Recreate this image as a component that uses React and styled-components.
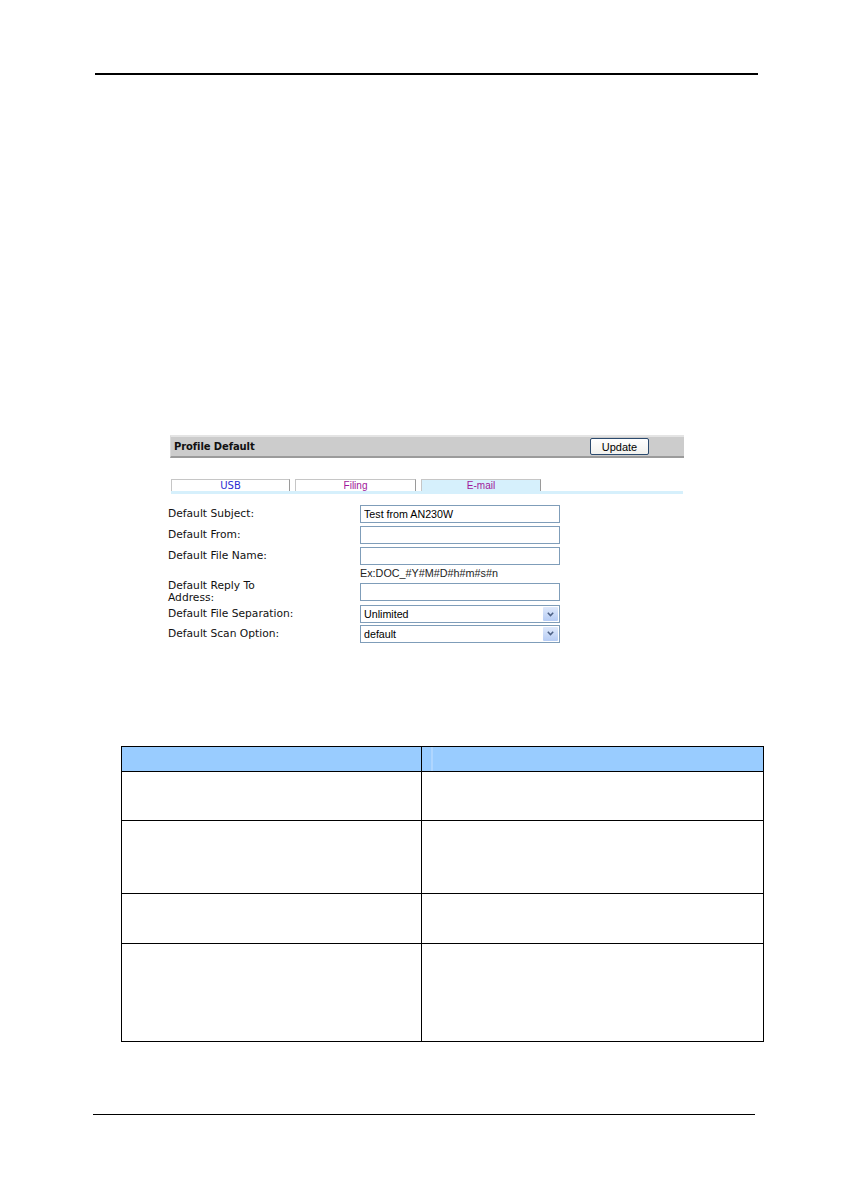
import React from "react";
import styled, { createGlobalStyle } from "styled-components";

const GlobalStyle = createGlobalStyle`
  html, body {
    margin: 0;
    padding: 0;
    background: #ffffff;
  }
  body {
    font-family: "DejaVu Sans", Verdana, sans-serif;
    color: #000;
  }
`;

const Page = styled.div`
  width: 841px;
  height: 1191px;
  display: flex;
  flex-direction: column;
  overflow: hidden;
  background: #fff;
`;

const Rule = styled.div`
  height: ${(p) => p.$thick}px;
  background: #000;
  margin: ${(p) => p.$margin};
`;

/* ---------- embedded web-admin panel ---------- */

const Sheet = styled.section`
  margin: 360px 0 0 168px;
  width: 516px;
  display: flex;
  flex-direction: column;
`;

const PanelBar = styled.div`
  margin-left: 2px;
  height: 23px;
  box-sizing: border-box;
  display: flex;
  align-items: center;
  justify-content: space-between;
  padding: 0 35px 0 3px;
  background: #cccccc;
  border-top: 2px solid #e4e4e4;
  border-bottom: 2px solid #9b9b9b;
  border-left: 1px solid #dadada;
`;

const PanelTitle = styled.span`
  font-family: "DejaVu Sans", Verdana, sans-serif;
  font-weight: bold;
  font-size: 10px;
  color: #111;
  letter-spacing: -0.1px;
`;

const UpdateButton = styled.button`
  width: 59px;
  height: 17px;
  box-sizing: border-box;
  padding: 0;
  border: 1px solid #2b4a6e;
  border-radius: 2px;
  background: linear-gradient(#ffffff, #f1f1ee);
  font-family: "Liberation Sans", Arial, sans-serif;
  font-size: 11px;
  color: #000;
  line-height: 14px;
`;

const TabStrip = styled.div`
  margin: 21px 1px 0 3px;
  display: flex;
  gap: 5px;
  border-bottom: 3px solid #d6f0fc;
`;

const Tab = styled.div`
  width: ${(p) => p.$w}px;
  height: 12px;
  box-sizing: border-box;
  border: 1px solid #c6c6c6;
  border-right-color: #9a9a9a;
  border-bottom: none;
  background: ${(p) => (p.$active ? "#d6f0fc" : "#ffffff")};
  color: ${(p) => p.$color};
  font-family: ${(p) =>
    p.$sans ? '"Liberation Sans", Arial, sans-serif' : '"DejaVu Sans", Verdana, sans-serif'};
  font-size: 10px;
  line-height: 11px;
  text-align: center;
`;

const FormGrid = styled.div`
  margin-top: 9px;
  display: grid;
  grid-template-columns: 192px 200px;
  grid-template-rows: 21px 21px 21px 14px 24px 20px 19px;
  align-items: center;
`;

const FieldLabel = styled.div`
  font-family: "DejaVu Sans", Verdana, sans-serif;
  font-size: 10.7px;
  line-height: 12px;
  color: #111;
`;

const TextBox = styled.input`
  width: 200px;
  height: 18px;
  box-sizing: border-box;
  margin: 0;
  border: 1px solid #7f9db9;
  padding: 0 3px;
  background: #fff;
  font-family: "Liberation Sans", Arial, sans-serif;
  font-size: 10.7px;
  color: #000;
  outline: none;
`;

const Hint = styled.div`
  font-family: "Liberation Sans", Arial, sans-serif;
  font-size: 10.8px;
  line-height: 12px;
  color: #222;
`;

const SelectBox = styled.div`
  width: 200px;
  height: 18px;
  box-sizing: border-box;
  border: 1px solid #7f9db9;
  display: flex;
  align-items: center;
  justify-content: space-between;
  padding-left: 3px;
  background: #fff;
  font-family: "Liberation Sans", Arial, sans-serif;
  font-size: 10.7px;
  color: #000;
`;

const DropButton = styled.span`
  width: 15px;
  height: 14px;
  margin-right: 1px;
  display: flex;
  align-items: center;
  justify-content: center;
  background: linear-gradient(#dfe9fb, #b6ccf4);
  border-radius: 1px;
`;

const Chevron = () => (
  <svg width="7" height="5" viewBox="0 0 7 5">
    <path d="M0.8 0.8 L3.5 3.6 L6.2 0.8" fill="none" stroke="#4d6185" strokeWidth="1.5" />
  </svg>
);

const Dropdown = ({ value }) => (
  <SelectBox>
    <span>{value}</span>
    <DropButton>
      <Chevron />
    </DropButton>
  </SelectBox>
);

/* ---------- parameter table ---------- */

const ParamTable = styled.table`
  margin: 103px 0 0 121px;
  width: 643px;
  border-collapse: collapse;
  border: 1px solid #000;
`;

const HeadCell = styled.th`
  height: 24px;
  padding: 0;
  border: 1px solid #000;
  background: ${(p) =>
    p.$notch
      ? "linear-gradient(90deg, #99ccff 0, #99ccff 10px, #c4e0ff 10px, #c4e0ff 11px, #99ccff 11px)"
      : "#99ccff"};
  width: ${(p) => p.$w}px;
`;

const BodyCell = styled.td`
  height: ${(p) => p.$h}px;
  padding: 0;
  border: 1px solid #000;
  background: #fff;
`;

const rowHeights = [48, 72, 49, 97];

export default function App() {
  return (
    <>
      <GlobalStyle />
      <Page>
        <Rule $thick={2} $margin="73px 83px 0 95px" />

        <Sheet>
          <PanelBar>
            <PanelTitle>Profile Default</PanelTitle>
            <UpdateButton type="button">Update</UpdateButton>
          </PanelBar>

          <TabStrip>
            <Tab $w={119} $color="#2d2dd2">USB</Tab>
            <Tab $w={121} $color="#a0189a" $sans>Filing</Tab>
            <Tab $w={120} $color="#a0189a" $active $sans>E-mail</Tab>
          </TabStrip>

          <FormGrid>
            <FieldLabel>Default Subject:</FieldLabel>
            <TextBox readOnly value="Test from AN230W" />

            <FieldLabel>Default From:</FieldLabel>
            <TextBox readOnly value="" />

            <FieldLabel>Default File Name:</FieldLabel>
            <TextBox readOnly value="" />

            <span />
            <Hint>Ex:DOC_#Y#M#D#h#m#s#n</Hint>

            <FieldLabel>
              Default Reply To
              <br />
              Address:
            </FieldLabel>
            <TextBox readOnly value="" />

            <FieldLabel>Default File Separation:</FieldLabel>
            <Dropdown value="Unlimited" />

            <FieldLabel>Default Scan Option:</FieldLabel>
            <Dropdown value="default" />
          </FormGrid>
        </Sheet>

        <ParamTable>
          <thead>
            <tr>
              <HeadCell $w={300} />
              <HeadCell $w={343} $notch />
            </tr>
          </thead>
          <tbody>
            {rowHeights.map((h, i) => (
              <tr key={i}>
                <BodyCell $h={h} />
                <BodyCell $h={h} />
              </tr>
            ))}
          </tbody>
        </ParamTable>

        <Rule $thick={1} $margin="72px 86px 0 93px" />
      </Page>
    </>
  );
}
